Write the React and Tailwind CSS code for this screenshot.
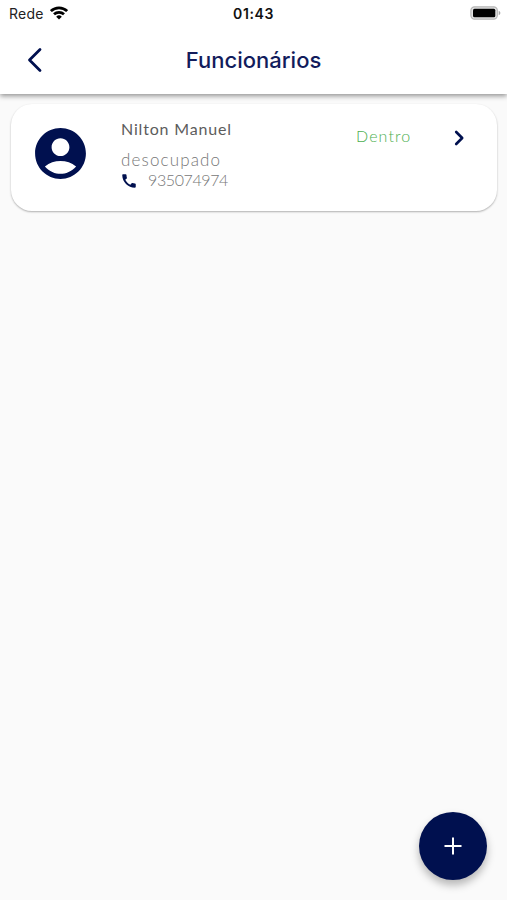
import React from 'react';

const employees = [
  { id: 1, name: 'Nilton Manuel', status: 'desocupado', phone: '935074974', presence: 'Dentro' },
];

function StatusBar() {
  return (
    <div className="grid h-7 grid-cols-3 items-center pl-[9px] pr-[6px] font-['Inter',sans-serif] text-black">
      <div className="flex items-center gap-[6px]">
        <span className="text-[14px] leading-7 tracking-[0.25px] text-[#222]">Rede</span>
        <svg className="mb-[3px] h-[14px] w-[18px]" viewBox="0 0 18 14" fill="none" stroke="currentColor" strokeWidth="2.7">
          <path d="M0.9 5.1a11.6 11.6 0 0 1 16.2 0" />
          <path d="M4 8.3a7.2 7.2 0 0 1 10 0" />
          <path d="M9 13.6l-2.8-2.9a4 4 0 0 1 5.6 0z" fill="currentColor" stroke="none" />
        </svg>
      </div>
      <span className="pr-[3px] text-center text-[14px] font-semibold leading-7 tracking-[0.6px] text-[#111]">01:43</span>
      <svg className="mb-[2px] h-[14px] w-[31px] justify-self-end" viewBox="0 0 31 14">
        <rect x="0.9" y="0.8" width="26.4" height="12.4" rx="3.6" fill="#e2e2e2" stroke="#b5b5b5" strokeWidth="1.2" />
        <rect x="3" y="2.7" width="22.3" height="8.6" rx="1.5" fill="#000" />
        <path d="M28.7 4.8c2.2.9 2.2 3.5 0 4.4z" fill="#a6a6a6" />
      </svg>
    </div>
  );
}

function Header() {
  return (
    <header className="relative h-[94px] bg-white shadow-[0_2px_5px_rgba(0,0,0,0.42)]">
      <StatusBar />
      <div className="grid h-[64px] grid-cols-[70px_1fr_70px] items-center">
        <button type="button" aria-label="Voltar" className="flex justify-center">
          <svg className="h-[26px] w-4" viewBox="0 0 16 26" fill="none" stroke="#00104f" strokeWidth="2.8" strokeLinecap="round" strokeLinejoin="round">
            <path d="M13 2.5L2.5 13 13 23.5" />
          </svg>
        </button>
        <h1 className="text-center font-['Inter',sans-serif] text-[22px] font-medium tracking-[0.02px] text-[#121c5c]">
          Funcionários
        </h1>
      </div>
    </header>
  );
}

function EmployeeCard({ employee }) {
  return (
    <div className="flex h-[107px] rounded-[21px] bg-white pl-[19px] pr-[26px] font-['Lato',sans-serif] text-[16px] shadow-[0_1px_2px_rgba(0,0,0,0.3)]">
      <svg className="mt-[19px] h-[61px] w-[61px] shrink-0" viewBox="0 0 24 24" fill="#00104f">
        <path d="M12 2C6.48 2 2 6.48 2 12s4.48 10 10 10 10-4.48 10-10S17.52 2 12 2zm0 4c1.93 0 3.5 1.57 3.5 3.5S13.93 13 12 13s-3.5-1.57-3.5-3.5S10.07 6 12 6zm0 14c-2.03 0-4.43-.82-6.14-2.88a9.947 9.947 0 0 1 12.28 0C16.43 19.18 14.03 20 12 20z" />
      </svg>

      <div className="ml-[30px] flex w-[235px] flex-col pt-[14px]">
        <span className="leading-[22px] tracking-[0.82px] text-[#5c5c5c]">{employee.name}</span>
        <span className="mt-[9px] text-[17px] font-light leading-[22px] tracking-[1.15px] text-[#777]">{employee.status}</span>
        <div className="flex items-center">
          <svg className="-ml-px mt-px h-[18px] w-[18px]" viewBox="0 0 24 24" fill="#00104f">
            <path d="M20.01 15.38c-1.23 0-2.42-.2-3.53-.56a.977.977 0 0 0-1.01.24l-1.57 1.97c-2.83-1.35-5.48-3.9-6.89-6.83l1.95-1.66c.27-.28.35-.67.24-1.02-.37-1.11-.56-2.3-.56-3.53 0-.54-.45-.99-.99-.99H4.19C3.65 3 3 3.24 3 3.99 3 13.28 10.73 21 20.01 21c.71 0 .99-.63.99-1.18v-3.45c0-.54-.45-.99-.99-.99z" />
          </svg>
          <span className="-mt-px ml-[10px] font-light leading-5 tracking-[-0.4px] text-[#777]">{employee.phone}</span>
        </div>
      </div>

      <span className="h-[22px] pt-[21px] font-light leading-[22px] tracking-[1.1px] text-[#4caf50]">{employee.presence}</span>
      <svg className="ml-auto mr-[6px] mt-[26px] h-4 w-[11px]" viewBox="0 0 11 16" fill="none" stroke="#00104f" strokeWidth="2.6" strokeLinecap="round" strokeLinejoin="round">
        <path d="M2.2 2L8.2 8l-6 6" />
      </svg>
    </div>
  );
}

export default function App() {
  return (
    <div className="flex h-[900px] w-full flex-col bg-[#fafafa]">
      <Header />
      <main className="flex-1 pl-[11px] pr-[10px] pt-[10px]">
        {employees.map((employee) => (
          <EmployeeCard key={employee.id} employee={employee} />
        ))}
      </main>
      <button
        type="button"
        aria-label="Adicionar"
        className="mb-5 mr-5 flex h-[68px] w-[68px] items-center justify-center self-end rounded-full bg-[#00104f] shadow-[0_5px_9px_rgba(0,0,0,0.28)]"
      >
        <svg className="h-[18px] w-[18px]" viewBox="0 0 18 18" stroke="#fff" strokeWidth="2">
          <path d="M9 0.5v17M0.5 9h17" />
        </svg>
      </button>
    </div>
  );
}
